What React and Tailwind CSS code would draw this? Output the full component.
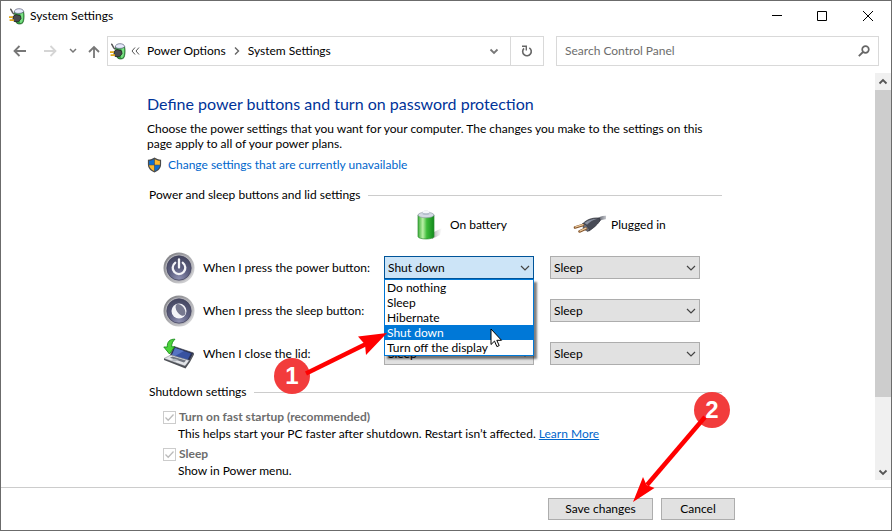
import React, { useState } from 'react';

const POWER_ACTIONS = ['Do nothing', 'Sleep', 'Hibernate', 'Shut down', 'Turn off the display'];

function PowerOptionsIcon() {
  return (
    <svg width="17" height="17" viewBox="0 0 17 17" className="shrink-0" aria-hidden="true">
      <path d="M5.500 3.500C5.500 7 6 13 7.500 15c1.500 1.500 5.500 1.300 6.500-.5 1-2.500 1.500-7 .5-11z" fill="#35a842" stroke="#245c2a" strokeWidth=".8" />
      <path d="M11.500 5.500l2.500-.5c.5 3 .2 6.500-.8 9-.6.700-1.500 1-2.200 1z" fill="#7be085" />
      <path d="M5.200 4C5.500-.3 14-.3 14.700 3.500c-1 2.300-8.500 2.600-9.500.5z" fill="#e6e9fb" stroke="#6a6f86" strokeWidth=".8" />
      <path d="M1.200 1C3 1.600 2.400 4.400 5 6.200" fill="none" stroke="#555" strokeWidth="1.500" />
      <path d="M4 8.500L7 6.600l4.500 1.200.5 3-2.800 3-4.200-.4L4 11.500z" fill="#4a4a4e" stroke="#222" strokeWidth=".8" />
      <path d="M0 9.200h4M.6 12.200H5" stroke="#e0a81c" strokeWidth="1.700" />
    </svg>
  );
}

function ShieldIcon() {
  return (
    <svg width="15" height="16" viewBox="0 0 15 16" className="shrink-0" aria-hidden="true">
      <path d="M7.500.6c1.800 1.300 4 2 6.600 2.100v4.500c0 3.800-2.500 6.600-6.600 8.300C3.400 13.800.9 11 .9 7.200V2.700C3.500 2.600 5.700 1.900 7.500.6z" fill="#4a4a4a" />
      <path d="M7.200 2.200v5.500H2.100V3.800c2-.1 3.700-.7 5.100-1.600z" fill="#0f6fd0" />
      <path d="M7.800 2.200v5.500h5.100V3.800c-2-.1-3.700-.7-5.100-1.600z" fill="#fdb92c" />
      <path d="M7.200 8.200v5.800c-3-1.400-4.800-3.300-5.100-5.800z" fill="#fdb92c" />
      <path d="M7.800 8.200v5.800c3-1.400 4.800-3.300 5.100-5.800z" fill="#0f6fd0" />
    </svg>
  );
}

function BatteryIcon() {
  return (
    <svg width="32" height="32" viewBox="0 0 32 32" aria-hidden="true">
      <defs>
        <linearGradient id="cell" x1="0" x2="1">
          <stop offset="0" stopColor="#3fae3b" />
          <stop offset=".3" stopColor="#b9f0a6" />
          <stop offset=".55" stopColor="#3dbb3a" />
          <stop offset="1" stopColor="#128a1c" />
        </linearGradient>
        <linearGradient id="cellShadow" x1="0" x2="1">
          <stop offset="0" stopColor="#777" stopOpacity=".7" />
          <stop offset="1" stopColor="#aaa" stopOpacity="0" />
        </linearGradient>
      </defs>
      <path d="M20 24l10-5-2 7-8 4z" fill="url(#cellShadow)" />
      <path d="M6 6v21.500c0 3.300 16 3.300 16 0V6z" fill="url(#cell)" stroke="#2f8c30" strokeWidth=".7" />
      <ellipse cx="14" cy="6" rx="8" ry="2.800" fill="#d3d9e4" stroke="#8d96a3" strokeWidth=".6" />
      <path d="M10.500 5V3c0-1.700 7-1.700 7 0v2c0 1.400-7 1.400-7 0z" fill="#b4bdcc" />
      <ellipse cx="14" cy="3" rx="3.500" ry="1.200" fill="#f5f7fb" />
    </svg>
  );
}

function PlugIcon() {
  return (
    <svg width="34" height="24" viewBox="0 0 34 24" aria-hidden="true">
      <defs>
        <linearGradient id="cord" x1="0" x2="1">
          <stop offset="0" stopColor="#4a4d58" />
          <stop offset="1" stopColor="#c3c5cb" />
        </linearGradient>
      </defs>
      <path d="M24 8C27 5 29 4.300 33 4.500" fill="none" stroke="url(#cord)" strokeWidth="3.500" />
      <path d="M10 10.500C14 6.500 19 4.800 25 5c2 .2 2.800 1.500 1.500 3.500-2.500 3.500-6 6.500-10.500 9.500L11 15z" fill="#484b56" stroke="#2b2d35" strokeWidth=".7" />
      <path d="M11.500 10c4-3 8.500-4.300 13-4.200-4.500 1.200-7.500 3-10.500 6z" fill="#8a909f" />
      <path d="M9.500 10.500l3.500 1.300 3.500 4.700-1.500 2-4.500-2.500z" fill="#686c77" stroke="#34363d" strokeWidth=".6" />
      <path d="M2 14.500l8-2.500M6.500 18.500l6.500-3" stroke="#85552b" strokeWidth="2.600" strokeLinecap="round" />
      <path d="M2.500 14l7.500-2.300M7 18l6-2.800" stroke="#f0cfa2" strokeWidth="1.300" strokeLinecap="round" />
    </svg>
  );
}

function RoundButtonIcon({ children }) {
  return (
    <svg width="32" height="32" viewBox="0 0 32 32" className="shrink-0" aria-hidden="true">
      <defs>
        <linearGradient id="ring" x1="0" y1="0" x2="1" y2="1">
          <stop offset="0" stopColor="#77777c" />
          <stop offset="1" stopColor="#e2e2e4" />
        </linearGradient>
        <radialGradient id="face" cx=".5" cy=".95" r=".9">
          <stop offset="0" stopColor="#8f91b2" />
          <stop offset=".5" stopColor="#5c5e7f" />
          <stop offset="1" stopColor="#464862" />
        </radialGradient>
      </defs>
      <circle cx="16" cy="16" r="15.500" fill="url(#ring)" />
      <circle cx="16" cy="16" r="13.600" fill="#b5b5bb" />
      <circle cx="16" cy="16" r="12.200" fill="url(#face)" stroke="#40415a" strokeWidth=".7" />
      {children}
    </svg>
  );
}

function PowerButtonIcon() {
  return (
    <RoundButtonIcon>
      <path d="M12.200 10.800a6.300 6.300 0 1 0 7.600 0" fill="none" stroke="#f4f4f8" strokeWidth="2.300" strokeLinecap="round" />
      <path d="M16 7.500v8" stroke="#f4f4f8" strokeWidth="2.300" strokeLinecap="round" />
    </RoundButtonIcon>
  );
}

function SleepButtonIcon() {
  return (
    <RoundButtonIcon>
      <circle cx="16" cy="16" r="7.500" fill="#f4f4f8" />
      <ellipse cx="17.500" cy="14.800" rx="3.800" ry="6.700" transform="rotate(-35 17.500 14.800)" fill="#777990" />
    </RoundButtonIcon>
  );
}

function LidIcon() {
  return (
    <svg width="32" height="32" viewBox="0 0 32 32" className="shrink-0" aria-hidden="true">
      <path d="M11 8.500L30.500 15l-5 9.500L7 18z" fill="#2a3152" stroke="#3b3f4b" strokeWidth=".7" />
      <path d="M12 10l16 5.500-3.500 6.500L9 17z" fill="#3852a0" />
      <path d="M12 10l9 3-9 5-3-1z" fill="#5673c2" />
      <path d="M1 20.500L8 17l18.500 5.500L22 28z" fill="#e3e5e9" stroke="#8a8e96" strokeWidth=".6" />
      <path d="M7 19.800l2.500-1.300L23 22.500l-2 2z" fill="#70757f" />
      <path d="M7.500 22.200l4-1.500 4 1.200-3.500 1.600z" fill="#b5b9c1" />
      <path d="M1 20.500L22 28l4.500-5.500 4-7.500.5 1.500-4 7.500-4.500 6.500L1 22z" fill="#505359" />
      <path d="M12 1.200C6.500 1 4 4 4.300 9H.8l5.700 7 5-7.200H8.700C8.500 6 9.500 3.500 12 1.200z" fill="#4cd33b" stroke="#1a8f1c" strokeWidth=".9" />
    </svg>
  );
}

function Chevron({ className }) {
  return (
    <svg width="10" height="10" viewBox="0 0 10 10" className={className} aria-hidden="true">
      <path d="M1 3l4 4 4-4" fill="none" stroke="currentColor" strokeWidth="1.200" />
    </svg>
  );
}

function ThickChevron({ className }) {
  return (
    <svg width="10" height="8" viewBox="0 0 10 8" className={className} aria-hidden="true">
      <path d="M1.500 2.500L5 6l3.500-3.500" fill="none" stroke="currentColor" strokeWidth="1.800" />
    </svg>
  );
}

function Select({ label, value, onChange, open }) {
  return (
    <div className="relative w-[150px]">
      <select
        aria-label={label}
        value={value}
        onChange={(e) => onChange(e.target.value)}
        className={
          open
            ? 'block h-[23px] w-full appearance-none border border-[#005499] bg-[#cce4f7] pl-[3px] pr-5 text-xs leading-4 text-black'
            : 'block h-[23px] w-full appearance-none border border-[#adadad] bg-[#e1e1e1] pl-[3px] pr-5 text-xs leading-4 text-black'
        }
      >
        {POWER_ACTIONS.map((action) => (
          <option key={action}>{action}</option>
        ))}
      </select>
      <Chevron className="pointer-events-none absolute right-1 top-[7px] text-[#444]" />
    </div>
  );
}

function StepBadge({ number, className }) {
  return (
    <span className={`absolute z-30 flex size-9 items-center justify-center rounded-full bg-[#f23c3c] font-['Liberation_Sans'] text-2xl font-bold text-white ${className}`}>
      {number}
    </span>
  );
}

function OpenList({ selected }) {
  return (
    <div className="absolute left-0 top-[23px] z-10 w-full">
      <ul role="listbox" className="border border-[#0078d7] bg-white shadow-[3px_3px_2px_rgba(0,0,0,0.5)]">
        {POWER_ACTIONS.map((action) => (
          <li
            key={action}
            role="option"
            aria-selected={action === selected}
            className={
              action === selected
                ? 'bg-[#0078d7] pl-0.5 leading-[15px] text-white'
                : 'pl-0.5 leading-[15px] text-black'
            }
          >
            {action}
          </li>
        ))}
      </ul>
      {/* mouse pointer */}
      <svg width="13" height="20" viewBox="0 0 13 20" className="absolute left-[106px] top-[49px] z-20" aria-hidden="true">
        <path d="M1 1v15.500l3.500-3.400 2.400 5.500 2.300-1-2.400-5.300H11.500z" fill="#fff" stroke="#000" strokeWidth="1" />
      </svg>
      {/* step 1 */}
      <StepBadge number="1" className="-left-[110px] top-[79px]" />
      <svg width="84" height="48" viewBox="0 0 84 48" className="absolute -left-[80px] top-[50px] z-30" aria-hidden="true">
        <path d="M2 44.500L62 15" stroke="#f00" strokeWidth="4.500" />
        <path d="M83 4L54 7.500l7 8L62 26z" fill="#f00" />
      </svg>
    </div>
  );
}

function SectionTitle({ children, className }) {
  return (
    <div className={`flex items-center gap-[7px] pl-0.5 ${className}`}>
      <h2 className="leading-4">{children}</h2>
      <div className="h-px flex-1 bg-[#ccc]" />
    </div>
  );
}

function ShutdownOption({ id, label, children }) {
  return (
    <div className="pl-4">
      <div className="flex items-center gap-[3px]">
        <span className="relative flex size-[13px]">
          <input id={id} type="checkbox" defaultChecked disabled className="size-[13px] appearance-none border border-[#ccc] bg-white" />
          <svg width="13" height="13" viewBox="0 0 13 13" className="pointer-events-none absolute inset-0" aria-hidden="true">
            <path d="M2.500 6.500l2.700 2.700L10.500 3.500" fill="none" stroke="#bbb" strokeWidth="1.300" />
          </svg>
        </span>
        <label htmlFor={id} className="font-bold leading-4 text-[#6d6d6d]">{label}</label>
      </div>
      <p className="mt-px pl-[15px] leading-4">{children}</p>
    </div>
  );
}

export default function App() {
  const [battery, setBattery] = useState({ power: 'Shut down', sleep: 'Sleep', lid: 'Sleep' });
  const [plugged, setPlugged] = useState({ power: 'Sleep', sleep: 'Sleep', lid: 'Sleep' });

  const rows = [
    { key: 'power', label: 'When I press the power button:', icon: <PowerButtonIcon /> },
    { key: 'sleep', label: 'When I press the sleep button:', icon: <SleepButtonIcon /> },
    { key: 'lid', label: 'When I close the lid:', icon: <LidIcon /> },
  ];

  return (
    <div className="flex min-h-screen flex-col border border-[#6b6b6b] bg-white font-['Lato',sans-serif] text-xs text-black">
      {/* Title bar */}
      <header className="flex h-[30px] items-center pl-2">
        <PowerOptionsIcon />
        <h1 className="flex-1 pl-1">System Settings</h1>
        <button type="button" aria-label="Minimize" className="flex h-full w-[45px] items-center justify-center">
          <svg width="10" height="10" viewBox="0 0 10 10"><path d="M0 4.500h10" stroke="#000" /></svg>
        </button>
        <button type="button" aria-label="Maximize" className="flex h-full w-[46px] items-center justify-center">
          <svg width="10" height="10" viewBox="0 0 10 10"><path d="M.5.5h9v9h-9z" fill="none" stroke="#000" /></svg>
        </button>
        <button type="button" aria-label="Close" className="flex h-full w-[46px] items-center justify-center">
          <svg width="10" height="10" viewBox="0 0 10 10"><path d="M0 0l10 10M10 0L0 10" stroke="#000" /></svg>
        </button>
      </header>

      {/* Navigation */}
      <nav className="mt-[5px] grid h-[30px] grid-cols-[106px_437fr_335fr] items-center pr-3">
        <div className="flex items-center text-[#777]">
          <button type="button" aria-label="Back" className="ml-3">
            <svg width="14" height="12" viewBox="0 0 14 12"><path d="M13 6H2M6.500 1l-5 5 5 5" fill="none" stroke="currentColor" strokeWidth="1.800" /></svg>
          </button>
          <button type="button" aria-label="Forward" disabled className="ml-4 text-[#d5d5d5]">
            <svg width="14" height="12" viewBox="0 0 14 12"><path d="M1 6h11M7.500 1l5 5-5 5" fill="none" stroke="currentColor" strokeWidth="1.800" /></svg>
          </button>
          <button type="button" aria-label="Recent locations" className="ml-3">
            <svg width="8" height="6" viewBox="0 0 8 6"><path d="M1 1l3 3 3-3" fill="none" stroke="currentColor" strokeWidth="1.500" /></svg>
          </button>
          <button type="button" aria-label="Up" className="ml-[11px]">
            <svg width="12" height="13" viewBox="0 0 12 13"><path d="M6 13V2M1 7l5-5 5 5" fill="none" stroke="currentColor" strokeWidth="1.800" /></svg>
          </button>
        </div>
        <div className="flex h-full items-center border border-[#d9d9d9] pl-0.5">
          <PowerOptionsIcon />
          <svg width="9" height="8" viewBox="0 0 9 8" className="ml-1 text-[#555]" aria-hidden="true">
            <path d="M4 .5L1 4l3 3.500M8 .5L5 4l3 3.500" fill="none" stroke="currentColor" />
          </svg>
          <a href="#power-options" className="ml-[7px]">Power Options</a>
          <svg width="6" height="8" viewBox="0 0 6 8" className="mx-2 text-[#666]" aria-hidden="true">
            <path d="M1 .5L4.500 4 1 7.500" fill="none" stroke="currentColor" strokeWidth="1.400" />
          </svg>
          <a href="#system-settings" className="flex-1">System Settings</a>
          <button type="button" aria-label="Previous locations" className="flex h-full w-8 items-center justify-center text-[#777]">
            <ThickChevron />
          </button>
          <button type="button" aria-label="Refresh" className="flex h-full w-[33px] items-center justify-center border-l border-[#d9d9d9] text-[#666]">
            <svg width="12" height="12" viewBox="0 0 12 12">
              <path d="M8.300 2.800A4.300 4.300 0 1 1 3 3.300" fill="none" stroke="currentColor" strokeWidth="1.600" />
              <path d="M1 1.300h4.300V5.500" fill="none" stroke="currentColor" strokeWidth="1.400" />
            </svg>
          </button>
        </div>
        <div className="ml-3 flex h-full items-center border border-[#d9d9d9] px-2">
          <input type="search" aria-label="Search Control Panel" placeholder="Search Control Panel" className="min-w-0 flex-1 outline-none placeholder:text-[#6d6d6d]" />
          <svg width="12" height="12" viewBox="0 0 12 12" className="text-[#666]" aria-hidden="true">
            <circle cx="7.500" cy="4.500" r="3.300" fill="none" stroke="currentColor" strokeWidth="1.700" />
            <path d="M5 7L.8 11.200" stroke="currentColor" strokeWidth="1.800" />
          </svg>
        </div>
      </nav>

      <div className="mt-[7px] flex flex-1">
        <main className="min-w-0 flex-1 pl-[146px] pt-[21px]">
          <div className="w-full max-w-[575px]">
            <h2 className="text-base leading-5 text-[#003399]">Define power buttons and turn on password protection</h2>
            <p className="mt-[7px] leading-[15px]">
              Choose the power settings that you want for your computer. The changes you make to the settings on this
              page apply to all of your power plans.
            </p>
            <a href="#unavailable" className="mt-1.5 flex items-center gap-1.5 leading-4 text-[#0066cc]">
              <ShieldIcon />
              Change settings that are currently unavailable
            </a>

            <SectionTitle className="mt-3.5">Power and sleep buttons and lid settings</SectionTitle>
            <div className="mt-1.5 grid grid-cols-[221px_150px_150px] gap-x-4">
              <div className="col-start-2 flex h-8 items-center gap-1.5 pl-7">
                <BatteryIcon />
                <span>On battery</span>
              </div>
              <div className="flex h-8 items-center gap-1 pl-[23px]">
                <PlugIcon />
                <span>Plugged in</span>
              </div>
            </div>
            <div className="mt-[5px]">
              {rows.map((row) => (
                <div key={row.key} className="grid h-[43px] grid-cols-[221px_150px_150px] items-center gap-x-4">
                  <div className="flex items-center gap-2 pl-4">
                    {row.icon}
                    <span className="whitespace-nowrap">{row.label}</span>
                  </div>
                  <div className="relative">
                    <Select
                      label={`${row.label} On battery`}
                      value={battery[row.key]}
                      onChange={(value) => setBattery({ ...battery, [row.key]: value })}
                      open={row.key === 'power'}
                    />
                    {row.key === 'power' && <OpenList selected={battery.power} />}
                  </div>
                  <Select
                    label={`${row.label} Plugged in`}
                    value={plugged[row.key]}
                    onChange={(value) => setPlugged({ ...plugged, [row.key]: value })}
                  />
                </div>
              ))}
            </div>

            <SectionTitle className="mt-[9px]">Shutdown settings</SectionTitle>
            <div className="mt-[9px] flex flex-col gap-1">
              <ShutdownOption id="fast-startup" label="Turn on fast startup (recommended)">
                This helps start your PC faster after shutdown. Restart isn’t affected.{' '}
                <a href="#learn-more" className="text-[#0066cc] underline">Learn More</a>
              </ShutdownOption>
              <ShutdownOption id="sleep" label="Sleep">Show in Power menu.</ShutdownOption>
            </div>
          </div>
        </main>

        {/* Scrollbar */}
        <div className="flex w-4 flex-col bg-[#f0f0f0] text-[#555]" aria-hidden="true">
          <div className="flex h-[17px] items-center justify-center">
            <ThickChevron className="rotate-180" />
          </div>
          <div className="flex-[307] bg-[#cdcdcd]" />
          <div className="flex-[66]" />
          <div className="flex h-[17px] items-center justify-center">
            <ThickChevron />
          </div>
        </div>
      </div>

      <footer className="mt-[7px] flex gap-2 border-t border-[#ccc] py-2.5 pl-[547px]">
        <div className="relative">
          <button type="button" className="h-[22px] w-[105px] border border-[#adadad] bg-[#e1e1e1]">Save changes</button>
          {/* step 2 */}
          <StepBadge number="2" className="-top-[106px] left-[146px]" />
          <svg width="76" height="88" viewBox="0 0 76 88" className="absolute -top-[83px] left-[84px] z-30" aria-hidden="true">
            <path d="M73 2L15 70" stroke="#f00" strokeWidth="4.500" />
            <path d="M1 87l10-25 3.500 8 8 3z" fill="#f00" />
          </svg>
        </div>
        <button type="button" className="h-[22px] w-[74px] border border-[#adadad] bg-[#e1e1e1]">Cancel</button>
      </footer>
    </div>
  );
}
